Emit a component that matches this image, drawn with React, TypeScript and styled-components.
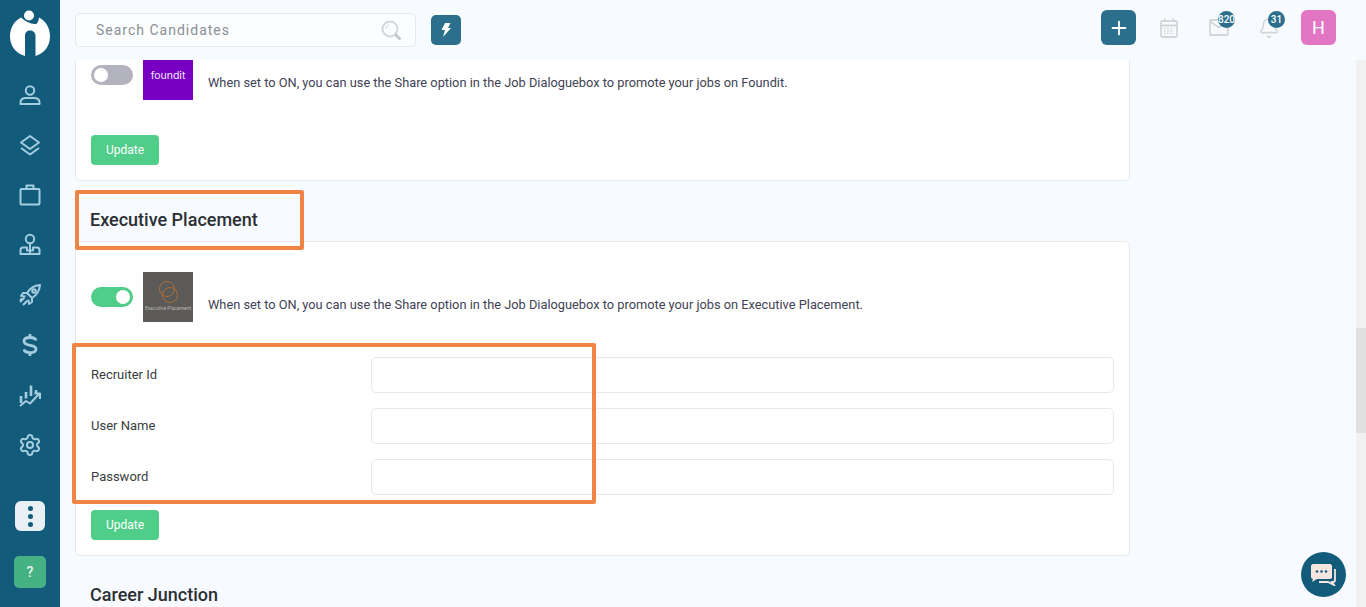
import React from 'react';
import styled, { createGlobalStyle } from 'styled-components';
import { Settings, Plus, Bell } from 'lucide-react';

const GlobalStyle = createGlobalStyle`
  html, body {
    margin: 0;
    height: 100%;
    overflow: hidden;
    background: #f7fbff;
    font-family: Roboto, "Liberation Sans", sans-serif;
    color: #343a40;
  }
  * { box-sizing: border-box; }
`;

const COLORS = {
  sidebar: '#135b7a',
  primary: '#2b6f8c',
  green: '#50cd89',
  border: '#e6e8eb',
  icon: '#a4cde0',
  orange: '#f08444',
};

const NavSvg = ({ children }: { children: React.ReactNode }) => (
  <svg width="24" height="24" viewBox="0 0 24 24" fill="none" stroke="currentColor" strokeWidth="2" strokeLinejoin="round">
    {children}
  </svg>
);

const PersonIcon = () => (
  <NavSvg>
    <circle cx="12" cy="7.500" r="4.200" />
    <path d="M2.500 21v-1.500c0-3 2.500-4.500 5.500-4.500h8c3 0 5.500 1.500 5.500 4.500V21z" />
  </NavSvg>
);

const LayersIcon = () => (
  <NavSvg>
    <path d="M12 3l9 6.500-9 6.500-9-6.500z" />
    <path d="M3 15l9 6.500 9-6.500" />
  </NavSvg>
);

const CaseIcon = () => (
  <NavSvg>
    <rect x="2.500" y="6" width="19" height="15.500" rx="1" />
    <path d="M8.500 6V2.500h7V6" />
  </NavSvg>
);

const TeamIcon = () => (
  <NavSvg>
    <circle cx="12" cy="6" r="4.200" />
    <path d="M12 10.500V21M2.500 21v-4c0-1.500 1-2.500 2.500-2.500h4v3h6v-3h4c1.500 0 2.500 1 2.500 2.500v4z" />
  </NavSvg>
);

const RocketIcon = () => (
  <NavSvg>
    <path d="M22 2c-6 .5-10 3-13 8l5 5c5-3 7.500-7 8-13z" />
    <circle cx="16" cy="8" r="1.800" />
    <path d="M9 10H5l-2 3 4.500.5M14 15v4l-3 2-.5-4.500" />
    <path d="M6.500 14.500L2 19M9.500 17.500L5 22M4 15.500L2 17.500" />
  </NavSvg>
);

const MoneyIcon = () => (
  <svg width="24" height="24" viewBox="0 0 24 24" fill="none" stroke="currentColor" strokeWidth="2.800">
    <path d="M18 7.500C17.500 5.500 15 4.500 12 4.500c-3.500 0-6 1.500-6 3.800 0 5.700 12 2.400 12 7.600 0 2.300-2.500 3.700-6 3.700-3 0-5.500-1-6-3.200" />
    <path d="M12 1v3.500M12 19.500V23" />
  </svg>
);

const ChartIcon = () => (
  <NavSvg>
    <path d="M3 13v7M8 9v6.500M13 2.500v10.500M18 7v3" strokeWidth="2.600" />
    <path d="M2 23l6-5 4 2.500 9-9.500M16.500 10.500H22V16" />
  </NavSvg>
);

const BrandLogo = () => (
  <svg width="40" height="47" viewBox="0 0 40 47">
    <path
      d="M11 7.500C4 11 0 18 0 26.500 0 36 6 43.500 15 46V26c0-3.500 2-5.500 5-5.500s5.500 2 5.500 5.500v20C34 43.500 40 36 40 26.500 40 18 36 11 29 7.500c-.5 3.500-1.500 6-3 6.500-5 .5-10-2-15-6.500z"
      fill="#fff"
    />
    <circle cx="19" cy="5.500" r="5" fill="#fff" />
  </svg>
);

const SearchGlass = () => (
  <svg width="20" height="20" viewBox="0 0 20 20" fill="none">
    <circle cx="9" cy="9" r="7.500" stroke="#d5d8da" strokeWidth="2" />
    <path d="M5 9c0-2 1.500-3.800 3.500-4" stroke="#e3e5e7" strokeWidth="1.500" />
    <path d="M15 15l3.500 3.500" stroke="#c6c9cb" strokeWidth="3" strokeLinecap="round" />
  </svg>
);

const BoltIcon = () => (
  <svg width="10" height="14" viewBox="0 0 10 14">
    <path d="M4 0h5.500L7 5h3L2 14l2-7H0.500z" fill="#fff" />
  </svg>
);

const CalendarGlyph = () => (
  <svg width="18" height="20" viewBox="0 0 18 20" fill="none" stroke="currentColor" strokeWidth="1.800">
    <rect x="1" y="3" width="16" height="16" rx="1.500" />
    <path d="M1 7.500h16M5 0.500V3M13 0.500V3" />
    <path d="M4 10.500h10M4 13h10M4 15.500h10" strokeWidth="1.400" strokeDasharray="1.600 1.600" />
  </svg>
);

const MailGlyph = () => (
  <svg width="20" height="17" viewBox="0 0 20 17" fill="none" stroke="currentColor" strokeWidth="1.800">
    <rect x="1" y="1" width="18" height="15" rx="1" />
    <path d="M1 2.500l9 6 9-6" />
  </svg>
);

const ChatIcon = () => (
  <svg width="26" height="22" viewBox="0 0 26 22">
    <path
      d="M2 0h17c1 0 2 1 2 2v11c0 1-1 2-2 2H6l-5 3 1-3c-1 0-2-1-2-2V2c0-1 1-2 2-2z"
      fill="#f7e6df"
    />
    <circle cx="6" cy="7.500" r="1.300" fill="#135b7a" />
    <circle cx="10.500" cy="7.500" r="1.300" fill="#135b7a" />
    <circle cx="15" cy="7.500" r="1.300" fill="#135b7a" />
    <path d="M24 5v11c0 1-1 2-2 2h-1l2 3-6-3H8" fill="none" stroke="#f7e6df" strokeWidth="1.800" />
  </svg>
);

const navItems = [
  { key: 'person', icon: <PersonIcon /> },
  { key: 'layers', icon: <LayersIcon /> },
  { key: 'jobs', icon: <CaseIcon /> },
  { key: 'team', icon: <TeamIcon /> },
  { key: 'rocket', icon: <RocketIcon /> },
  { key: 'money', icon: <MoneyIcon /> },
  { key: 'chart', icon: <ChartIcon /> },
  { key: 'settings', icon: <Settings size={24} strokeWidth={2} /> },
];

const fields = ['Recruiter Id', 'User Name', 'Password'];

const PLACEMENT_TEXT =
  'When set to ON, you can use the Share option in the Job Dialoguebox to promote your jobs on';

export default function App() {
  return (
    <>
      <GlobalStyle />
      <Shell>
        <Sidebar>
          <LogoWrap>
            <BrandLogo />
          </LogoWrap>
          <Nav>
            {navItems.map((item) => (
              <NavItem key={item.key}>{item.icon}</NavItem>
            ))}
          </Nav>
          <MoreButton>
            <Dot />
            <Dot />
            <Dot />
          </MoreButton>
          <HelpButton>?</HelpButton>
        </Sidebar>

        <Main>
          <Header>
            <SearchBox>
              <SearchText>Search Candidates</SearchText>
              <SearchGlass />
            </SearchBox>
            <BoltButton>
              <BoltIcon />
            </BoltButton>
            <HeaderRight>
              <PlusButton>
                <Plus size={22} color="#fff" strokeWidth={2} />
              </PlusButton>
              <HeaderIcon>
                <CalendarGlyph />
              </HeaderIcon>
              <HeaderIcon>
                <MailGlyph />
                <Badge>820</Badge>
              </HeaderIcon>
              <HeaderIcon>
                <Bell size={22} strokeWidth={1.800} />
                <Badge>31</Badge>
              </HeaderIcon>
              <Avatar>H</Avatar>
            </HeaderRight>
          </Header>

          <Content>
            <ClippedCard>
              <ToggleRow>
                <Toggle $on={false} />
                <FounditLogo>foundit</FounditLogo>
                <RowText>{PLACEMENT_TEXT} Foundit.</RowText>
              </ToggleRow>
              <UpdateSpaced>Update</UpdateSpaced>
            </ClippedCard>

            <SectionTitle>
              Executive Placement
              <TitleHighlight />
            </SectionTitle>

            <Card>
              <ToggleRow>
                <Toggle $on />
                <PlacementLogo>
                  <svg width="26" height="26" viewBox="0 0 26 26" fill="none" stroke="#a8703a" strokeWidth="1">
                    <circle cx="12" cy="10" r="7.500" />
                    <circle cx="15" cy="16" r="7.500" />
                  </svg>
                  <PlacementName>Executive Placement</PlacementName>
                </PlacementLogo>
                <RowText>{PLACEMENT_TEXT} Executive Placement.</RowText>
              </ToggleRow>

              <Fields>
                <FieldHighlight />
                {fields.map((name) => (
                  <FieldRow key={name}>
                    <FieldLabel>{name}</FieldLabel>
                    <FieldInput />
                  </FieldRow>
                ))}
              </Fields>
              <UpdateButton>Update</UpdateButton>
            </Card>

            <SectionTitle>Career Junction</SectionTitle>
          </Content>

          <ChatButton>
            <ChatIcon />
          </ChatButton>
        </Main>

        <ScrollTrack>
          <ScrollThumb />
        </ScrollTrack>
      </Shell>
    </>
  );
}

const Shell = styled.div`
  display: flex;
  height: 607px;
  overflow: hidden;
`;

const Sidebar = styled.aside`
  width: 60px;
  flex-shrink: 0;
  background: ${COLORS.sidebar};
  display: flex;
  flex-direction: column;
  align-items: center;
`;

const LogoWrap = styled.div`
  height: 57px;
  padding-top: 10px;
`;

const Nav = styled.nav`
  margin-top: 13px;
  display: flex;
  flex-direction: column;
  align-items: center;
  flex: 1;
`;

const NavItem = styled.div`
  width: 60px;
  height: 50px;
  display: flex;
  align-items: center;
  justify-content: center;
  color: ${COLORS.icon};
`;

const MoreButton = styled.div`
  width: 30px;
  height: 30px;
  border-radius: 6px;
  background: #e9f0f5;
  display: flex;
  flex-direction: column;
  align-items: center;
  justify-content: center;
  gap: 3px;
`;

const Dot = styled.span`
  width: 5px;
  height: 5px;
  border-radius: 50%;
  background: ${COLORS.sidebar};
`;

const HelpButton = styled.div`
  width: 32px;
  height: 32px;
  margin: 25px 0 19px;
  border-radius: 5px;
  background: #46b183;
  color: #e8f5ee;
  display: flex;
  align-items: center;
  justify-content: center;
  font-size: 14px;
  font-weight: 500;
`;

const Main = styled.main`
  position: relative;
  flex: 1;
  min-width: 0;
  display: flex;
  flex-direction: column;
`;

const Header = styled.header`
  position: relative;
  z-index: 2;
  height: 60px;
  flex-shrink: 0;
  background: #f7fbff;
  padding: 0 20px 0 15px;
  display: flex;
  align-items: center;
  gap: 15px;
`;

const SearchBox = styled.div`
  width: 341px;
  height: 34px;
  border: 1px solid ${COLORS.border};
  border-radius: 5px;
  background: #fbfdff;
  padding: 0 14px 0 20px;
  display: flex;
  align-items: center;
  justify-content: space-between;
`;

const SearchText = styled.span`
  font-size: 14px;
  letter-spacing: 1px;
  color: #8b9095;
`;

const BoltButton = styled.div`
  width: 30px;
  height: 30px;
  border-radius: 5px;
  background: ${COLORS.primary};
  display: flex;
  align-items: center;
  justify-content: center;
`;

const HeaderRight = styled.div`
  margin-left: auto;
  align-self: flex-start;
  padding-top: 10px;
  display: flex;
  align-items: center;
  gap: 15px;
`;

const PlusButton = styled.div`
  width: 35px;
  height: 35px;
  border-radius: 6px;
  background: ${COLORS.primary};
  display: flex;
  align-items: center;
  justify-content: center;
`;

const HeaderIcon = styled.div`
  position: relative;
  width: 35px;
  height: 35px;
  color: #d3d5d8;
  display: flex;
  align-items: center;
  justify-content: center;
`;

const Badge = styled.span`
  position: absolute;
  top: 1px;
  left: 17px;
  min-width: 17px;
  height: 17px;
  border-radius: 50%;
  background: ${COLORS.primary};
  color: #fff;
  font-size: 10px;
  font-weight: 500;
  display: flex;
  align-items: center;
  justify-content: center;
`;

const Avatar = styled.div`
  width: 35px;
  height: 35px;
  border-radius: 6px;
  background: #e276c4;
  color: #fff;
  font-size: 18px;
  display: flex;
  align-items: center;
  justify-content: center;
`;

const Content = styled.div`
  flex: 1;
  min-height: 0;
  overflow: hidden;
  padding: 0 226px 0 15px;
`;

const Card = styled.section`
  background: #fff;
  border: 1px solid ${COLORS.border};
  border-radius: 5px;
  padding: 30px 15px 15px;
`;

const ClippedCard = styled(Card)`
  margin-top: -41px;
`;

const ToggleRow = styled.div`
  display: flex;
  align-items: flex-start;
  height: 50px;
`;

const Toggle = styled.div<{ $on: boolean }>`
  position: relative;
  width: 42px;
  height: 20px;
  margin: 15px 10px 0 0;
  border-radius: 10px;
  background: ${(p) => (p.$on ? COLORS.green : '#b3b3c0')};

  &::after {
    content: '';
    position: absolute;
    top: 3px;
    left: ${(p) => (p.$on ? '25px' : '3px')};
    width: 14px;
    height: 14px;
    border-radius: 50%;
    background: #fff;
  }
`;

const FounditLogo = styled.div`
  width: 50px;
  height: 50px;
  background: #7700c2;
  color: #f4e8fb;
  font-family: Inter, Roboto, sans-serif;
  font-size: 10.500px;
  font-weight: 400;
  display: flex;
  align-items: center;
  justify-content: center;
`;

const PlacementLogo = styled.div`
  width: 50px;
  height: 50px;
  background: #5c5a58;
  display: flex;
  flex-direction: column;
  align-items: center;
  padding-top: 7px;
  overflow: hidden;
`;

const PlacementName = styled.span`
  font-size: 5px;
  white-space: nowrap;
  color: #b8b4af;
`;

const RowText = styled.p`
  margin: 0 0 0 15px;
  padding-top: 25px;
  font-size: 12.800px;
  line-height: 15px;
  color: #3f4254;
`;

const UpdateButton = styled.button`
  display: block;
  width: 68px;
  height: 30px;
  border: none;
  border-radius: 4px;
  background: ${COLORS.green};
  color: #fff;
  font-family: Roboto, sans-serif;
  font-size: 12px;
  padding: 0;
`;

const UpdateSpaced = styled(UpdateButton)`
  margin-top: 35px;
`;

const SectionTitle = styled.h3`
  position: relative;
  margin: 28px 0 10px 15px;
  font-size: 18px;
  line-height: 22px;
  font-weight: 500;
  color: #2b2f33;
`;

const TitleHighlight = styled.span`
  position: absolute;
  top: -19px;
  left: -15px;
  width: 229px;
  height: 60px;
  border: 4px solid ${COLORS.orange};
  border-radius: 2px;
`;

const Fields = styled.div`
  position: relative;
  margin-top: 35px;
  display: flex;
  flex-direction: column;
  gap: 15px;
  margin-bottom: 15px;
`;

const FieldHighlight = styled.span`
  position: absolute;
  top: -14px;
  left: -19px;
  width: 524px;
  height: 161px;
  border: 4px solid ${COLORS.orange};
  border-radius: 2px;
  z-index: 1;
`;

const FieldRow = styled.div`
  display: flex;
  align-items: center;
`;

const FieldLabel = styled.label`
  width: 280px;
  flex-shrink: 0;
  font-size: 13px;
  line-height: 15px;
  padding-bottom: 2px;
  color: #3a3d40;
`;

const FieldInput = styled.input`
  flex: 1;
  min-width: 0;
  height: 36px;
  border: 1px solid ${COLORS.border};
  border-radius: 5px;
  background: #fff;
`;

const ChatButton = styled.div`
  position: absolute;
  left: 1241px;
  bottom: 10px;
  width: 45px;
  height: 45px;
  border-radius: 50%;
  background: ${COLORS.sidebar};
  display: flex;
  align-items: center;
  justify-content: center;
`;

const ScrollTrack = styled.div`
  width: 10px;
  flex-shrink: 0;
  margin-top: 60px;
  background: #f1f1f1;
  padding-top: 268px;
`;

const ScrollThumb = styled.div`
  height: 105px;
  background: #e0e0e0;
`;
